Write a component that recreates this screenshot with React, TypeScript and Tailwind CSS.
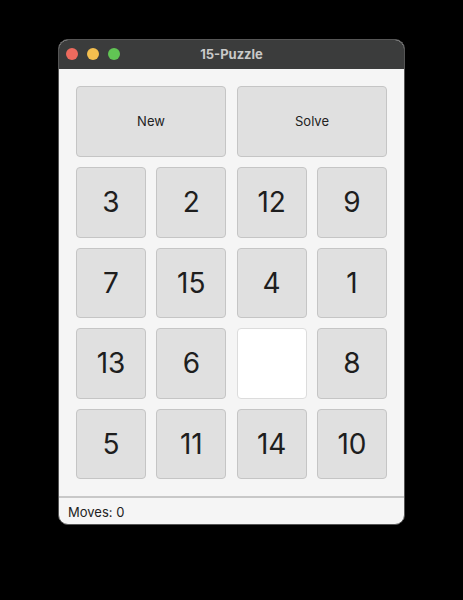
import React from "react";

const tiles: (number | null)[] = [3, 2, 12, 9, 7, 15, 4, 1, 13, 6, null, 8, 5, 11, 14, 10];

const App: React.FC = () => {
  return (
    <div className="w-[463px] h-[600px] bg-black pt-[39px] pl-[58px] font-['Inter',sans-serif]">
      <div className="w-[347px] rounded-[10px] overflow-hidden bg-[#f5f5f5] border border-[#555]">
        {/* title bar */}
        <div className="relative h-[29px] bg-[#3b3c3c] flex items-center justify-center">
          <div className="absolute left-[7px] top-[8px] flex gap-[9px]">
            <span className="w-[12px] h-[12px] rounded-full bg-[#ed6a5e]" />
            <span className="w-[12px] h-[12px] rounded-full bg-[#f4bf4f]" />
            <span className="w-[12px] h-[12px] rounded-full bg-[#61c554]" />
          </div>
          <span className="text-[13px] font-bold text-[#c9c9c9]">15-Puzzle</span>
        </div>

        <div className="px-[17px] pt-[17px] pb-[17px]">
          <div className="grid grid-cols-2 gap-x-[11px] mb-[10px]">
            <button className="h-[71px] rounded-[4px] bg-[#e0e0e0] border border-[#c5c5c5] text-[13px] text-[#222]">
              New
            </button>
            <button className="h-[71px] rounded-[4px] bg-[#e0e0e0] border border-[#c5c5c5] text-[13px] text-[#222]">
              Solve
            </button>
          </div>
          <div className="grid grid-cols-4 gap-x-[10.3px] gap-y-[10px]">
            {tiles.map((t, i) =>
              t === null ? (
                <div
                  key={i}
                  className="h-[70.6px] rounded-[4px] bg-white border border-[#dcdcdc]"
                />
              ) : (
                <button
                  key={i}
                  className="h-[70.6px] rounded-[4px] bg-[#e0e0e0] border border-[#c5c5c5] text-[28px] text-[#1e1e1e]"
                >
                  {t}
                </button>
              )
            )}
          </div>
        </div>

        <div className="h-[28px] border-t-2 border-[#c8c8c8] flex items-center pt-[2px] pl-[9px] text-[13px] text-[#222]">
          Moves: 0
        </div>
      </div>
    </div>
  );
};

export default App;
